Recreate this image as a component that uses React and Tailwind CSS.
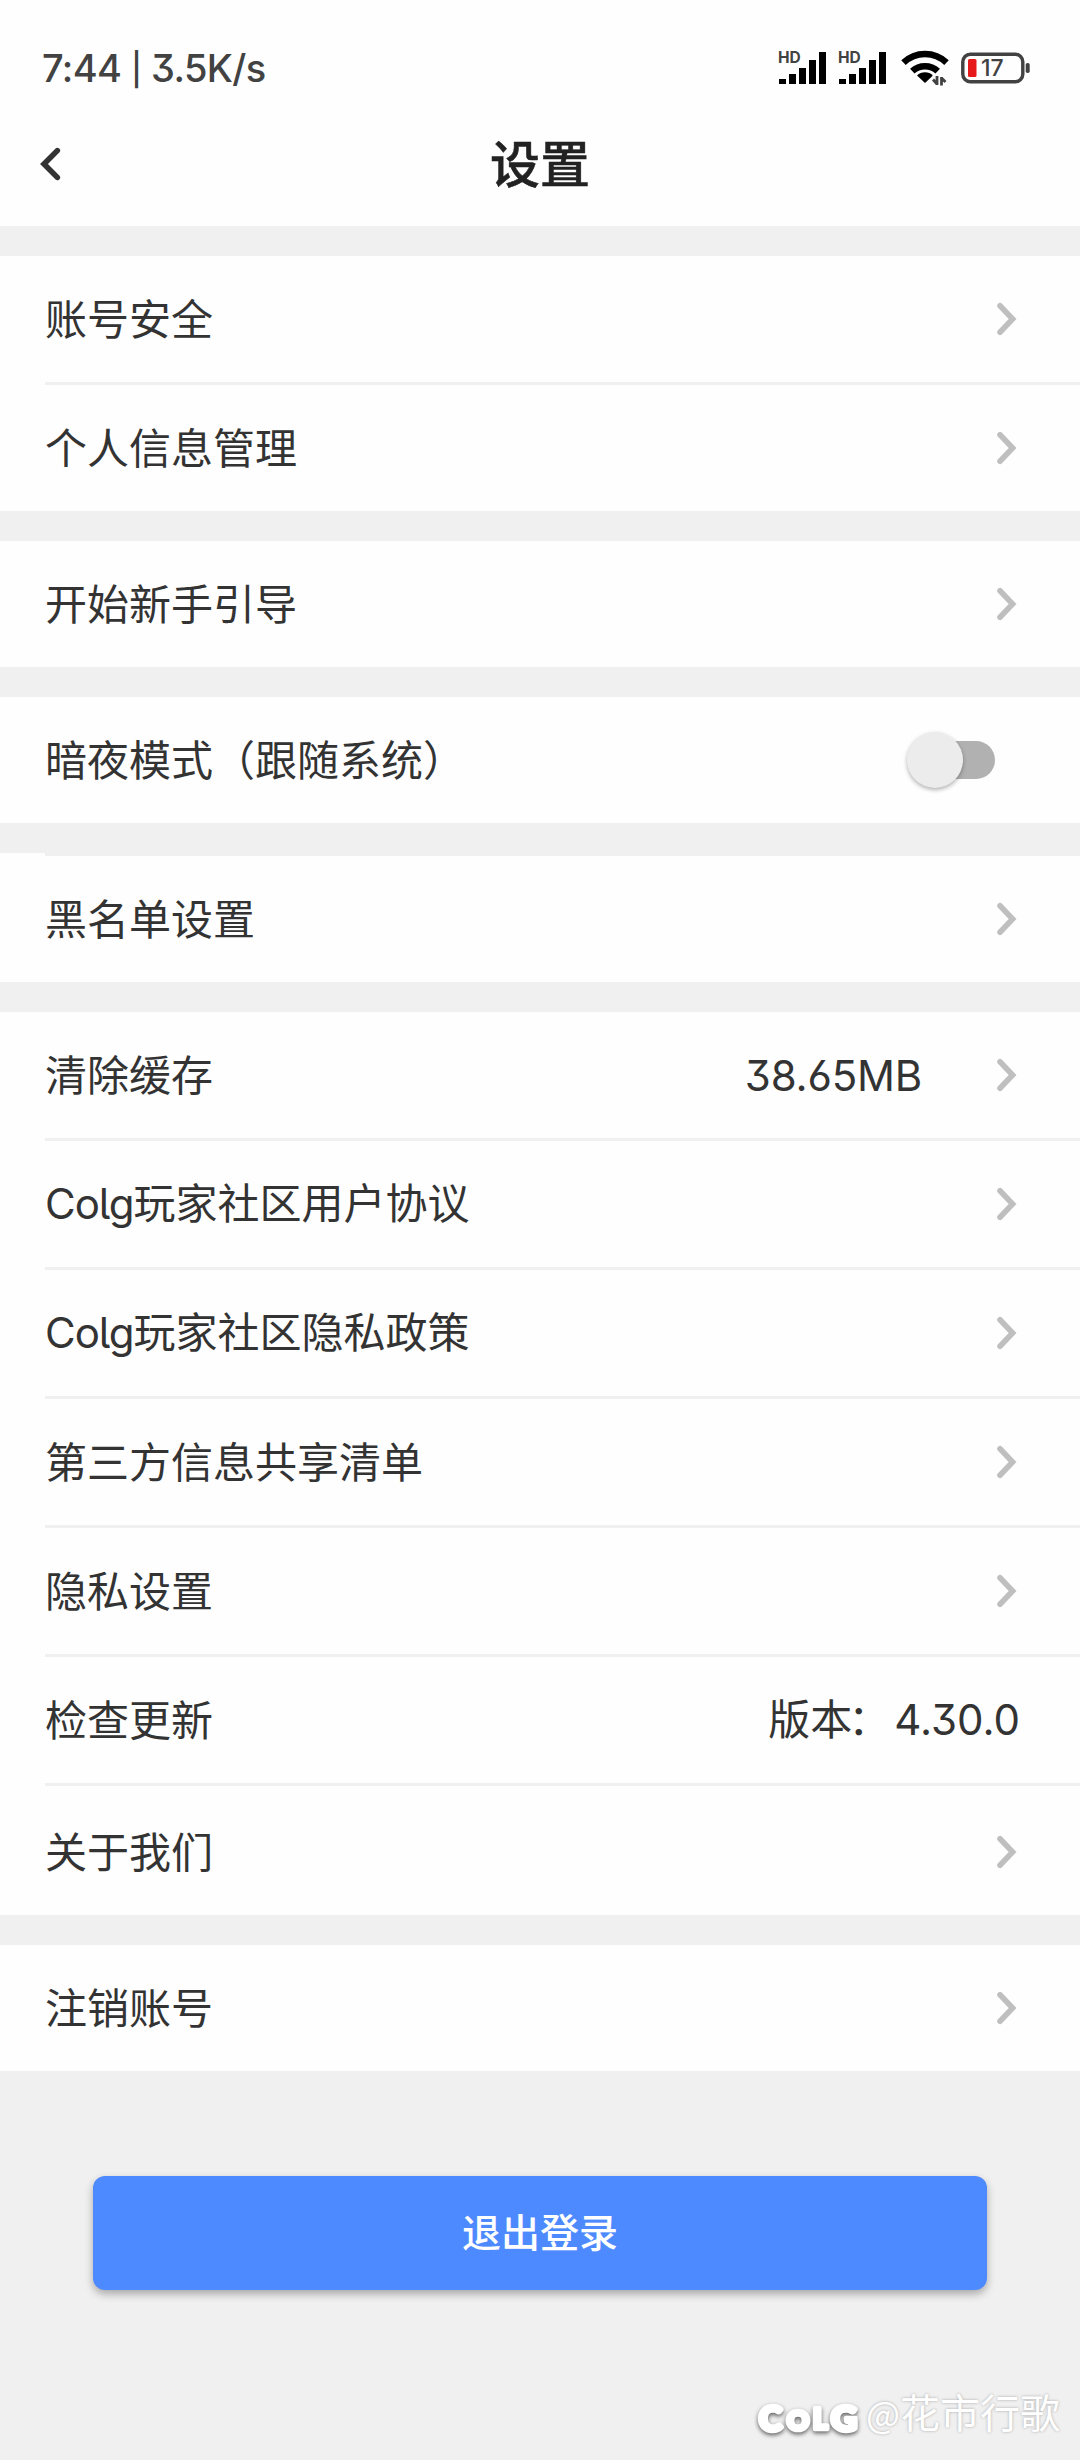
import React from 'react';

const groups = [
  [{ label: '账号安全' }, { label: '个人信息管理' }],
  [{ label: '开始新手引导' }],
  [{ label: '暗夜模式（跟随系统）', type: 'switch' }],
  [{ label: '黑名单设置', topLine: true }],
  [
    { label: '清除缓存', value: '38.65MB' },
    { label: '玩家社区用户协议', brand: 'Colg' },
    { label: '玩家社区隐私政策', brand: 'Colg' },
    { label: '第三方信息共享清单' },
    { label: '隐私设置' },
    { label: '检查更新', type: 'version', value: '4.30.0' },
    { label: '关于我们', spaced: true },
  ],
  [{ label: '注销账号' }],
];

const Latin = ({ className = '', children }) => (
  <span className={`font-[Inter,'Noto_Sans_CJK_SC',sans-serif] [font-feature-settings:'cv03','cv05','cv09'] ${className}`}>
    {children}
  </span>
);

const SignalIcon = () => (
  <svg width="50" height="42" viewBox="0 -4 50 42" className="shrink-0 overflow-visible">
    <text x="-1" y="12.3" fontSize="15.5" fontWeight="700" fontFamily="Inter, sans-serif" fill="#424242">HD</text>
    <rect x="0" y="28" width="7" height="5" />
    <rect x="10" y="23" width="7" height="10" />
    <rect x="20" y="17" width="7" height="16" />
    <rect x="30" y="9" width="7" height="24" />
    <rect x="40" y="1" width="7" height="32" />
  </svg>
);

const WifiIcon = () => (
  <svg width="48" height="36" viewBox="0 0 48 36" className="shrink-0 overflow-visible">
    <path d="M2.5 12.6 A31 31 0 0 1 45.5 12.6" fill="none" stroke="#000" strokeWidth="6.5" />
    <path d="M11.3 21.2 A18.5 18.5 0 0 1 36.7 21.2" fill="none" stroke="#000" strokeWidth="6.5" />
    <path d="M16 25.5 A11.5 11.5 0 0 1 32 25.5 L24 33 Z" />
    <path d="M31.5 25 h16 v10 h-14 z" fill="#fefefe" />
    <path d="M36 26 v9 M36 34 l-4 -4.5 M40.5 35.5 v-8.5 M40.5 28 l4 4" fill="none" stroke="#424242" strokeWidth="2.8" />
  </svg>
);

const BatteryIcon = () => (
  <svg width="70" height="32" viewBox="0 0 70 32" className="shrink-0">
    <rect x="1.8" y="2.3" width="60" height="27.4" rx="7.5" fill="none" stroke="#424242" strokeWidth="3.4" />
    <rect x="64.7" y="11" width="4" height="10" rx="1.8" fill="#424242" />
    <rect x="7" y="7" width="8.5" height="18" rx="1.5" fill="#e6191b" />
    <text x="20" y="24.4" fontSize="23" fontWeight="500" fontFamily="Inter, sans-serif" fill="#424242">17</text>
  </svg>
);

const ChevronRight = () => (
  <svg width="24" height="36" viewBox="0 0 24 36" className="shrink-0">
    <path d="M4 4.8 L16.6 18 L4 31.2" fill="none" stroke="#bfbfbf" strokeWidth="5.6" strokeLinecap="round" />
  </svg>
);

const Toggle = () => (
  <div className="w-[88px] h-14 mr-[25px] relative flex items-center justify-end">
    <div className="w-[80px] h-[38px] rounded-full bg-[#b1b1b1]"></div>
    <div className="absolute left-0 top-0 size-14 rounded-full bg-[#ececec] shadow-[0_2px_4px_rgba(0,0,0,0.3)]"></div>
  </div>
);

const Row = ({ item }) => (
  <div className="h-[126px] flex items-center">
    <div className={item.brand ? 'flex-1 pb-[3px]' : 'flex-1 pb-[5px]'}>
      {item.brand && <Latin className="tracking-[-1px]">{item.brand}</Latin>}
      {item.label}
    </div>
    {item.type === 'switch' && <Toggle />}
    {item.type === 'version' && (
      <div className="pb-[3px]">
        版<span className="tracking-[-4px]">本</span><span className="tracking-[4px]">：</span>
        <Latin>{item.value}</Latin>
      </div>
    )}
    {!item.type && (
      <>
        {item.value && <Latin className="mr-[74px] pt-[2px] tracking-[-0.2px]">{item.value}</Latin>}
        <ChevronRight />
      </>
    )}
  </div>
);

const App = () => {
  return (
    <div className="w-[1080px] h-[2460px] overflow-hidden flex flex-col bg-[#f0f0f0] text-[#333] text-[42px] leading-none font-['Noto_Sans_CJK_SC',sans-serif]">
      {/* Status bar + title */}
      <div className="h-[226px] bg-[#fefefe]">
        <div className="h-[136px] pl-[42px] pr-[49px] flex items-center justify-between text-[#424242]">
          <Latin className="text-[38px] font-medium tracking-[-0.6px]">
            7:44 <span className="text-[32px] align-[1px]">|</span> 3.5K/s
          </Latin>
          <div className="flex items-center">
            <SignalIcon />
            <div className="w-2.5"></div>
            <SignalIcon />
            <div className="w-3"></div>
            <WifiIcon />
            <div className="w-3"></div>
            <BatteryIcon />
          </div>
        </div>
        <div className="h-[50px] px-9 grid grid-cols-[1fr_auto_1fr] items-center">
          <svg width="28" height="36" viewBox="0 0 28 36">
            <path d="M21.3 4.6 L8 18 L21.3 31.4" fill="none" stroke="#333" strokeWidth="5.6" strokeLinecap="round" />
          </svg>
          <div className="pb-[5px] text-[50px] font-medium text-[#222] [-webkit-text-stroke:0.5px_#222]">设置</div>
        </div>
      </div>

      {/* Setting groups */}
      {groups.map((rows, g) => (
        <div key={g} className="mt-[30px] bg-[#fefefe]">
          {rows.map((item, i) => (
            <div key={item.label} className="pl-[45px]">
              {(i > 0 || item.topLine) && <div className="h-[3px] bg-[#f0f0f0]"></div>}
              <div className={item.spaced ? 'pt-[3px] pr-[60px]' : 'pr-[60px]'}>
                <Row item={item} />
              </div>
            </div>
          ))}
        </div>
      ))}

      <button className="mt-[105px] mx-[93px] h-[114px] pb-[5px] rounded-xl bg-[#4e8aff] text-white text-[39px] font-medium shadow-[0_4px_8px_rgba(0,0,0,0.3)]">
        退出登录
      </button>

      {/* Watermark */}
      <div className="mt-auto h-[86px] pr-5 flex justify-end text-white">
        <svg width="106" height="44" viewBox="0 0 106 44" className="mt-6 mr-[3px] overflow-visible drop-shadow-[0_2px_2px_rgba(0,0,0,0.6)]">
          <g fill="#fff" stroke="#fff" strokeWidth="4.6" strokeLinejoin="round" fontFamily="Lato, sans-serif" fontWeight="900">
            <text x="2" y="33" fontSize="34" textLength="23" lengthAdjust="spacingAndGlyphs">C</text>
            <text x="30" y="32" fontSize="27" textLength="22" lengthAdjust="spacingAndGlyphs">O</text>
            <text x="56" y="31" fontSize="28">L</text>
            <text x="74" y="33" fontSize="34" textLength="26" lengthAdjust="spacingAndGlyphs">G</text>
          </g>
        </svg>
        <div className="mt-[17px] text-[40px] [text-shadow:0_0_3px_rgba(0,0,0,0.3)]">
          <span className="text-[36px]">@</span>花市行歌
        </div>
      </div>
    </div>
  );
};

export default App;
